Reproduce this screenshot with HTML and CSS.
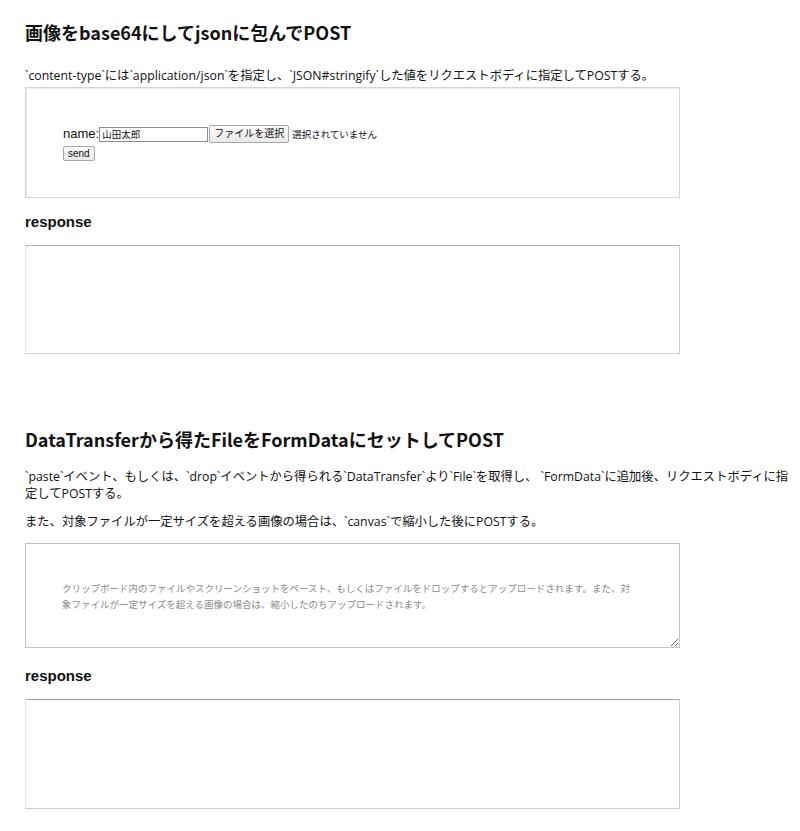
FILE: index.html
```html
<!DOCTYPE html>
<html lang="ja">
<head>
<meta charset="utf-8">
<title>upload</title>
<link rel="stylesheet" href="styles.css">
</head>
<body>
<section class="sec sec-first">
  <h1 class="title">画像をbase64にしてjsonに包んでPOST</h1>
  <p class="desc">`content-type`には`application/json`を指定し、`JSON#stringify`した値をリクエストボディに指定してPOSTする。</p>
  <div class="formbox">
    <form class="form">
      <div class="row">
        <label class="lbl" for="name">name:</label><input class="txt" id="name" type="text" value="山田太郎"><button type="button" class="btn filebtn">ファイルを選択</button><span class="nofile">選択されていません</span>
      </div>
      <div class="row">
        <button type="button" class="btn sendbtn">send</button>
      </div>
    </form>
  </div>
  <h3 class="resp">response</h3>
  <div class="respbox"></div>
</section>
<section class="sec sec-second">
  <h1 class="title">DataTransferから得たFileをFormDataにセットしてPOST</h1>
  <p class="desc desc-wrap">`paste`イベント、もしくは、`drop`イベントから得られる`DataTransfer`より`File`を取得し、 `FormData`に追加後、リクエストボディに指定してPOSTする。</p>
  <p class="desc desc-second">また、対象ファイルが一定サイズを超える画像の場合は、`canvas`で縮小した後にPOSTする。</p>
  <textarea class="drop" placeholder="クリップボード内のファイルやスクリーンショットをペースト、もしくはファイルをドロップするとアップロードされます。また、対象ファイルが一定サイズを超える画像の場合は、縮小したのちアップロードされます。"></textarea>
  <h3 class="resp resp-second">response</h3>
  <div class="respbox respbox-second"></div>
</section>
</body>
</html>
```

FILE: styles.css
```css
html, body {
  margin: 0;
  padding: 0;
  background: #fff;
}
body {
  padding: 0 10px 0 25px;
  color: #111;
  font-family: "Liberation Sans", "Noto Sans CJK JP", sans-serif;
}
.sec {
  display: flex;
  flex-direction: column;
  align-items: flex-start;
}
.title {
  margin: 20px 0 0;
  font-family: "Noto Sans CJK JP", sans-serif;
  font-size: 18px;
  line-height: 24px;
  font-weight: 700;
  color: #111;
}
.sec-second .title {
  margin-top: 73px;
}
.desc {
  margin: 23px 0 0;
  font-family: "Open Sans", "Noto Sans CJK JP", sans-serif;
  font-size: 12.3px;
  line-height: 18px;
}
.desc-wrap {
  margin-top: 17px;
  line-height: 17px;
}
.desc-second {
  margin-top: 11px;
}
.formbox {
  box-sizing: border-box;
  margin-top: 2px;
  width: 655px;
  height: 111px;
  border: 1px solid #d4d4d4;
  box-shadow: inset 1px 1px 0 #ececec;
  padding: 37px 37px;
}
.form {
  display: flex;
  flex-direction: column;
  gap: 3px;
}
.row {
  display: flex;
  align-items: center;
}
.lbl {
  font-size: 13px;
  line-height: 18px;
}
.txt {
  box-sizing: border-box;
  width: 109px;
  height: 15px;
  margin: 0;
  padding: 0 2px;
  border: 1px solid #8c8c8c;
  font-family: "Noto Sans CJK JP", sans-serif;
  font-size: 9.5px;
  color: #111;
}
.btn {
  box-sizing: border-box;
  margin: 0;
  border: 1px solid #a7a7a7;
  border-radius: 2px;
  background: linear-gradient(#fbfbfb, #e9e9e9);
  color: #111;
  font-family: "Liberation Sans", "Noto Sans CJK JP", sans-serif;
  font-size: 10px;
  line-height: 12px;
}
.filebtn {
  margin-left: 1px;
  height: 18px;
  padding: 0 4px;
}
.nofile {
  margin-left: 3px;
  font-family: "Noto Sans CJK JP", sans-serif;
  font-size: 9.5px;
}
.sendbtn {
  height: 15px;
  padding: 0 4px;
}
.resp {
  margin: 15px 0 0;
  font-size: 15px;
  line-height: 18px;
  font-weight: 700;
}
.respbox {
  box-sizing: border-box;
  margin-top: 14px;
  width: 655px;
  height: 109px;
  border: 1px solid #cfcfcf;
  border-top-color: #b4b4b4;
  border-left-color: #e2e2e2;
}
.drop {
  box-sizing: border-box;
  display: block;
  margin-top: 12px;
  width: 655px;
  height: 105px;
  border: 1px solid #c4c4c4;
  border-top-color: #bdbdbd;
  padding: 36px 40px 36px 36px;
  font-family: "Noto Sans CJK JP", sans-serif;
  font-size: 9.5px;
  line-height: 16px;
  resize: vertical;
}
.drop::placeholder {
  color: #8a8a8a;
}
.resp-second {
  margin-top: 19px;
}
.respbox-second {
  margin-top: 14px;
  height: 110px;
  border-top-color: #a4a4a4;
}
```
